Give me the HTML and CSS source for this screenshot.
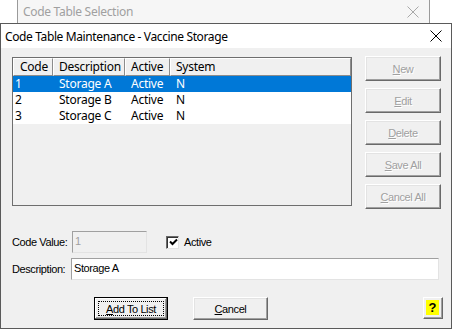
FILE: index.html
```html
<!DOCTYPE html>
<html>
<head>
<meta charset="utf-8">
<link rel="stylesheet" href="styles.css">
</head>
<body>
<div class="desk">
  <div class="win-back">
    <div class="back-title">
      <span class="back-text">Code Table Selection</span>
      <svg class="back-x" width="12" height="12" viewBox="0 0 12 12"><path d="M0.5 0.5L11.5 11.5M11.5 0.5L0.5 11.5" stroke="#a8a8a8" stroke-width="1"/></svg>
    </div>
  </div>

  <div class="win-main">
    <div class="titlebar">
      <span class="title-text">Code Table Maintenance - Vaccine Storage</span>
      <svg class="close-x" width="12" height="12" viewBox="0 0 12 12"><path d="M0.5 0.5L11.5 11.5M11.5 0.5L0.5 11.5" stroke="#000" stroke-width="1"/></svg>
    </div>
    <div class="body">
      <div class="top">
        <div class="listview">
          <div class="lv-head">
            <div class="hc">Code</div>
            <div class="hc">Description</div>
            <div class="hc">Active</div>
            <div class="hc last">System</div>
          </div>
          <div class="lv-row sel">
            <div class="c first">1</div><div class="c">Storage A</div><div class="c">Active</div><div class="c">N</div>
          </div>
          <div class="lv-row">
            <div class="c first">2</div><div class="c">Storage B</div><div class="c">Active</div><div class="c">N</div>
          </div>
          <div class="lv-row">
            <div class="c first">3</div><div class="c">Storage C</div><div class="c">Active</div><div class="c">N</div>
          </div>
        </div>
        <div class="side">
          <div class="btn dis"><span class="u">N</span>ew</div>
          <div class="btn dis"><span class="u">E</span>dit</div>
          <div class="btn dis"><span class="u">D</span>elete</div>
          <div class="btn dis"><span class="u">S</span>ave All</div>
          <div class="btn dis"><span class="u">C</span>ancel All</div>
        </div>
      </div>

      <div class="form">
        <div class="frow">
          <span class="lbl lbl-code">Code Value:</span>
          <div class="inp inp-code dis-inp">1</div>
          <div class="chk-wrap">
            <span class="chk"><svg width="9" height="9" viewBox="0 0 9 9"><path d="M1 3.5L3.5 6L8 1.5" stroke="#000" stroke-width="2" fill="none"/></svg></span>
            <span class="lbl">Active</span>
          </div>
        </div>
        <div class="frow frow2">
          <span class="lbl lbl-desc">Description:</span>
          <div class="inp inp-desc">Storage A</div>
        </div>
      </div>

      <div class="bottom">
        <div class="btn btn-def"><span class="focus"><span class="u">A</span>dd To List</span></div>
        <div class="btn btn-cancel"><span class="u">C</span>ancel</div>
        <div class="spacer"></div>
        <div class="help"><span class="help-in">?</span></div>
      </div>
    </div>
  </div>
</div>
</body>
</html>
```

FILE: styles.css
```css
html, body {
  margin: 0;
  padding: 0;
  background: #ffffff;
}
.desk {
  position: relative;
  width: 452px;
  height: 329px;
  overflow: hidden;
  background: #ffffff;
}
.win-back {
  position: absolute;
  left: 17px;
  top: 0;
  width: 411px;
  height: 60px;
  border-left: 1px solid #9a9a9a;
  border-right: 1px solid #9a9a9a;
  background: #f3f3f3;
}
.back-title {
  height: 23px;
  display: flex;
  align-items: center;
  padding-left: 5px;
  padding-right: 10px;
  background: #f6f6f6;
}
.back-text {
  font-family: "Noto Sans", sans-serif;
  font-size: 12px;
  color: #a0a0a0;
  letter-spacing: -0.3px;
  flex: 1;
}
.back-x { display: block; }

.win-main {
  position: absolute;
  left: 0;
  top: 23px;
  width: 450px;
  height: 304px;
  border: 1px solid #5a5a5a;
  background: #f0f0f0;
  display: flex;
  flex-direction: column;
}
.titlebar {
  height: 24px;
  background: #ffffff;
  display: flex;
  align-items: center;
  padding-left: 4px;
  padding-right: 9px;
}
.title-text {
  flex: 1;
  font-family: "Noto Sans", sans-serif;
  font-size: 12px;
  color: #000;
  letter-spacing: -0.38px;
}
.close-x { display: block; }

.body {
  flex: 1;
  padding: 9px 0 0 11px;
  display: flex;
  flex-direction: column;
}
.top {
  display: flex;
  align-items: flex-start;
  height: 149px;
}
.listview {
  width: 338px;
  height: 147px;
  border: 1px solid #6e6e6e;
  background: #f0f0f0;
  font-family: "Noto Sans", sans-serif;
  font-size: 12px;
  letter-spacing: -0.25px;
  color: #000;
}
.lv-head {
  display: grid;
  grid-template-columns: 40px 72px 45px 1fr;
  height: 18px;
}
.hc {
  border-top: 1px solid #ffffff;
  border-left: 1px solid #ffffff;
  border-right: 1px solid #8c8c8c;
  border-bottom: 1px solid #8c8c8c;
  padding-left: 5px;
  line-height: 16px;
  background: #f0f0f0;
}
.hc:first-child { padding-left: 6px; }
.lv-row {
  display: grid;
  grid-template-columns: 40px 72px 45px 1fr;
  height: 16px;
  line-height: 16px;
  background: #ffffff;
}
.lv-row.sel {
  background: #0078d7;
  color: #ffffff;
}
.c { padding-left: 6px; white-space: nowrap; }
.c.first { padding-left: 2px; }

.side {
  margin-left: 13px;
  margin-top: -1px;
  display: flex;
  flex-direction: column;
  gap: 7px;
}
.btn {
  box-sizing: border-box;
  width: 76px;
  height: 25px;
  background: #f0f0f0;
  border: 1px solid;
  border-color: #ffffff #696969 #696969 #ffffff;
  box-shadow: inset -1px -1px 0 #a0a0a0, inset 1px 1px 0 #e3e3e3;
  display: flex;
  align-items: center;
  justify-content: center;
  font-family: "Liberation Sans", Arial, sans-serif;
  font-size: 11px;
  letter-spacing: -0.4px;
  color: #000;
}
.btn.dis {
  color: #a0a0a0;
  text-shadow: 1px 1px 0 #ffffff;
}
.u { text-decoration: underline; text-underline-offset: 1px; }

.form {
  margin-top: 25px;
  display: flex;
  flex-direction: column;
  gap: 5px;
}
.frow {
  display: flex;
  align-items: center;
  height: 22px;
}
.lbl {
  font-family: "Liberation Sans", Arial, sans-serif;
  font-size: 11px;
  letter-spacing: -0.4px;
  color: #000;
}
.lbl-code { width: 60px; }
.lbl-desc { width: 59px; }
.inp {
  box-sizing: border-box;
  height: 22px;
  border: 1px solid;
  border-color: #a0a0a0 #e3e3e3 #e3e3e3 #a0a0a0;
  background: #ffffff;
  font-family: "Liberation Sans", Arial, sans-serif;
  font-size: 11px;
  letter-spacing: -0.4px;
  line-height: 14px;
  padding: 2px 0 0 2px;
  color: #000;
}
.inp-code { width: 75px; }
.dis-inp { background: #f0f0f0; color: #a0a0a0; }
.inp-desc { width: 368px; }

.chk-wrap {
  margin-left: 19px;
  display: flex;
  align-items: center;
  gap: 5px;
}
.chk {
  box-sizing: border-box;
  width: 13px;
  height: 13px;
  background: #ffffff;
  border: 1px solid;
  border-color: #696969 #e3e3e3 #e3e3e3 #696969;
  box-shadow: inset 1px 1px 0 #333;
  display: flex;
  align-items: center;
  justify-content: center;
  padding: 1px 0 0 1px;
}
.chk svg { display: block; }

.bottom {
  margin-top: 17px;
  display: flex;
  align-items: flex-start;
  padding-left: 82px;
  padding-right: 8px;
}
.btn-def {
  width: 74px;
  height: 23px;
  border: 1px solid #000;
  box-shadow: inset -1px -1px 0 #696969, inset 1px 1px 0 #ffffff, inset -2px -2px 0 #a0a0a0;
  padding: 3px;
  align-items: stretch;
}
.focus {
  flex: 1;
  border: 1px dotted #000;
  display: flex;
  align-items: center;
  justify-content: center;
}
.btn-cancel {
  width: 75px;
  height: 23px;
  margin-left: 25px;
}
.spacer { flex: 1; }
.help {
  box-sizing: border-box;
  width: 20px;
  height: 22px;
  border: 1px solid;
  border-color: #ffffff #696969 #696969 #ffffff;
  box-shadow: inset -1px -1px 0 #a0a0a0;
  background: #f0f0f0;
  padding: 2px 3px 3px 2px;
  display: flex;
}
.help-in {
  flex: 1;
  background: #ffff00;
  font-family: "Liberation Sans", Arial, sans-serif;
  font-weight: bold;
  font-size: 13px;
  line-height: 16px;
  text-align: center;
  color: #000;
}
```
